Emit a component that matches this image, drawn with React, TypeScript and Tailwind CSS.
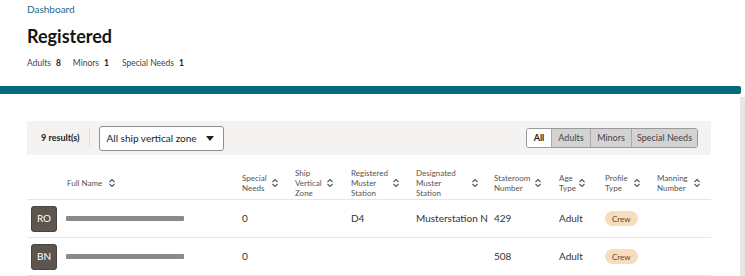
import React from "react";

const Sort = () => (
  <svg width="8" height="10" viewBox="0 0 8 10" className="shrink-0">
    <path d="M1.5 4 L4 1.5 L6.5 4" fill="none" stroke="#555" strokeWidth="1.1" />
    <path d="M1.5 6 L4 8.5 L6.5 6" fill="none" stroke="#555" strokeWidth="1.1" />
  </svg>
);

const cols = [
  { label: ["Special", "Needs"], w: 53, tw: 29 },
  { label: ["Ship", "Vertical", "Zone"], w: 56, tw: 31 },
  { label: ["Registered", "Muster", "Station"], w: 65, tw: 41 },
  { label: ["Designated", "Muster", "Station"], w: 78, tw: 55 },
  { label: ["Stateroom", "Number"], w: 65, tw: 40 },
  { label: ["Age", "Type"], w: 46, tw: 19 },
  { label: ["Profile", "Type"], w: 52, tw: 28 },
  { label: ["Manning", "Number"], w: 54, tw: 36 },
];

const HeaderCell = ({ label, w, tw }: { label: string[]; w: number; tw: number }) => (
  <div className="flex items-center" style={{ width: w }}>
    <div className="text-[8px] leading-[10px] text-[#555] whitespace-nowrap" style={{ width: tw }}>
      {label.map((l) => (
        <div key={l}>{l}</div>
      ))}
    </div>
    <Sort />
  </div>
);

const Avatar = ({ t }: { t: string }) => (
  <div className="w-[26px] h-[26px] rounded-[4px] bg-[#5d5650] flex items-center justify-center text-white text-[10px] shadow-[inset_0_0_0_1px_#4a443e]">
    {t}
  </div>
);

const Crew = () => (
  <span className="inline-flex items-center h-[15px] px-[7px] rounded-full bg-[#f8dcbc] text-[8px] text-[#5a4a3a]">
    Crew
  </span>
);

const Row = ({ av, vals }: { av: string; vals: string[] }) => (
  <div className="flex items-center h-[38px] border-b border-[#e6e6e6] text-[10px] text-[#333]">
    <div className="w-[215px] flex items-center pl-[4px] gap-[9px]">
      <Avatar t={av} />
      <div className="w-[118px] h-[5px] bg-[#8a8a8a] rounded-[1px] blur-[0.4px]" />
    </div>
    <div className="w-[53px]">{vals[0]}</div>
    <div className="w-[56px]">{vals[1]}</div>
    <div className="w-[65px]">{vals[2]}</div>
    <div className="w-[78px]">{vals[3]}</div>
    <div className="w-[65px]">{vals[4]}</div>
    <div className="w-[46px]">{vals[5]}</div>
    <div className="w-[52px]">
      <Crew />
    </div>
    <div className="w-[54px]"></div>
  </div>
);

export default function App() {
  return (
    <div
      className="w-[745px] h-[276px] overflow-hidden bg-white"
      style={{ fontFamily: "Lato, 'Noto Sans', sans-serif" }}
    >
      <div className="pl-[27px] pt-[2px]">
        <div className="text-[10px] leading-[14px] text-[#216b8e]">Dashboard</div>
        <div className="mt-[9px] text-[18px] leading-[22px] font-bold text-[#161513]">Registered</div>
        <div className="mt-[10px] flex items-center text-[8.5px] leading-[12px] text-[#444]">
          <span>Adults</span>
          <span className="ml-[5px] font-bold text-[#222]">8</span>
          <span className="ml-[12px]">Minors</span>
          <span className="ml-[5px] font-bold text-[#222]">1</span>
          <span className="ml-[13px]">Special Needs</span>
          <span className="ml-[5px] font-bold text-[#222]">1</span>
        </div>
      </div>
      <div className="mt-[17px] w-[741px] h-[8px] bg-[#04697a] rounded-r-[2px]" />
      <div className="flex">
        <div className="w-[740px] pl-[27px] pt-[27px]">
          <div className="w-[684px] h-[34px] bg-[#f4f3f1] flex items-center pl-[14px] pr-[13px]">
            <span className="text-[9px] font-bold text-[#222]">9 result(s)</span>
            <div className="ml-[9px] w-px h-[18px] bg-[#dcdcdc]" />
            <div className="ml-[9px] w-[125px] h-[25px] bg-white border border-[#8f8f8f] rounded-[3px] flex items-center justify-between pl-[7px] pr-[9px]">
              <span className="text-[10px] text-[#222]">All ship vertical zone</span>
              <svg width="8" height="5" viewBox="0 0 8 5">
                <path d="M0 0 L8 0 L4 5 Z" fill="#222" />
              </svg>
            </div>
            <div className="ml-auto flex h-[20px] border border-[#9a9a9a] rounded-[3px] overflow-hidden text-[9px]">
              <div className="w-[24px] bg-white font-bold text-[#222] flex items-center justify-center">All</div>
              <div className="w-[39px] bg-[#d3d3d3] text-[#444] border-l border-[#aaa] flex items-center justify-center">Adults</div>
              <div className="w-[41px] bg-[#d3d3d3] text-[#444] border-l border-[#aaa] flex items-center justify-center">Minors</div>
              <div className="w-[66px] bg-[#d3d3d3] text-[#444] border-l border-[#aaa] flex items-center justify-center">Special Needs</div>
            </div>
          </div>
          <div className="w-[684px] mt-[11px]">
            <div className="flex items-center h-[34px] border-b border-[#e6e6e6]">
              <div className="w-[215px] pl-[40px] flex items-center gap-[6px]">
                <span className="text-[8px] text-[#555]">Full Name</span>
                <Sort />
              </div>
              {cols.map((c) => (
                <HeaderCell key={c.label.join()} label={c.label} w={c.w} tw={c.tw} />
              ))}
            </div>
            <Row av="RO" vals={["0", "", "D4", "Musterstation N", "429", "Adult"]} />
            <Row av="BN" vals={["0", "", "", "", "508", "Adult"]} />
          </div>
        </div>
        <div className="mt-[3px] w-[5px] h-[200px] bg-[#e6e6e6]" />
      </div>
    </div>
  );
}
